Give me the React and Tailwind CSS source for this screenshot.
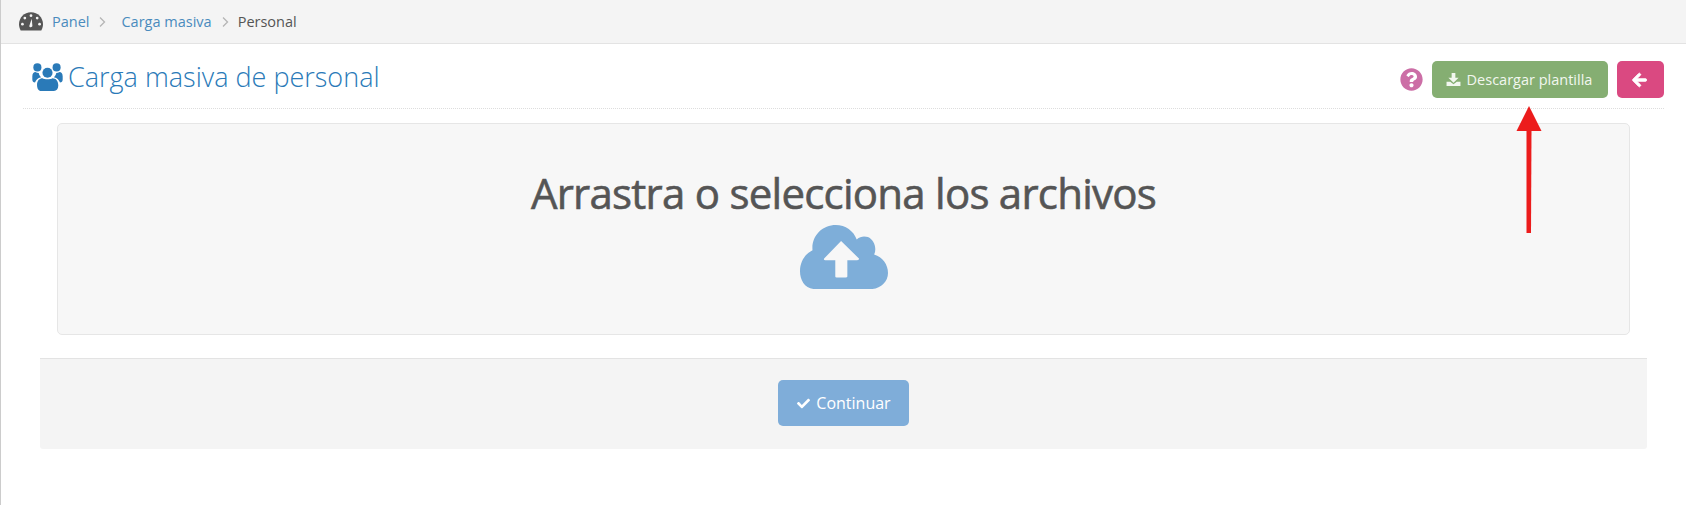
import { FaCheck, FaArrowLeft, FaQuestionCircle } from 'react-icons/fa';

const font = { fontFamily: '"Open Sans", sans-serif' };

function GaugeIcon() {
  return (
    <svg width="24" height="19" viewBox="57 37 70 54" className="shrink-0">
      <path d="M92 37C112 37 127 53 127 72C127 79 125 85 122 90H62C59 85 57 79 57 72C57 53 72 37 92 37Z" fill="#555" />
      <g fill="#f4f4f4">
        <circle cx="92" cy="47" r="4" />
        <circle cx="74" cy="54" r="4" />
        <circle cx="110" cy="54" r="4" />
        <circle cx="67" cy="72" r="4" />
        <circle cx="117" cy="72" r="4" />
        <path d="M94 56L96 76C97 82 87 83 87 77Z" />
      </g>
    </svg>
  );
}

function UsersIcon() {
  return (
    <svg width="31" height="28" viewBox="96 187 90 83" fill="#2a7ab8" className="shrink-0">
      <circle cx="141" cy="216" r="15" />
      <circle cx="111" cy="200" r="12" />
      <circle cx="168" cy="200" r="12" />
      <path d="M110 252C110 238 118 232 126 232C132 236 150 236 156 232C166 232 173 240 173 254C173 264 168 270 160 270H122C114 270 110 262 110 252Z" />
      <path d="M96 226C96 218 101 214 105 214C108 216 112 217 115 217C116 222 118 226 122 229C112 231 106 238 104 245C99 245 96 242 96 236Z" />
      <path d="M186 226C186 218 181 214 177 214C174 216 170 217 167 217C166 222 164 226 160 229C170 231 176 238 178 245C183 245 186 242 186 236Z" />
    </svg>
  );
}

function DownloadIcon() {
  return (
    <svg width="15" height="13" viewBox="0 0 15 14" fill="#f2f7ef" className="shrink-0">
      <path d="M5.5 0H9.5V5H13L7.5 10.5L2 5H5.5Z" />
      <path d="M0 9.5H4L7.5 12L11 9.5H15V14H0Z" />
    </svg>
  );
}

function CloudIcon() {
  return (
    <svg width="88" height="64" viewBox="670 222 197 191" preserveAspectRatio="none">
      <path
        d="M700 413C680 410 670 385 670 360C670 330 682 308 698 297C695 255 720 222 750 222C772 222 790 240 797 265C805 255 815 255 822 258C835 265 843 290 836 310C855 318 867 340 867 365C867 390 852 410 832 413Z"
        fill="#7eaed9"
      />
      <path
        d="M762 270L802 322Q803 327 798 327H776V376Q776 379 772 379H752Q749 379 749 376V327H727Q722 327 724 322Z"
        fill="#f7f7f7"
      />
    </svg>
  );
}

function Chevron({ className }) {
  return (
    <svg width="7" height="10" viewBox="0 0 7 10" fill="none" stroke="#b5b5b5" strokeWidth="1.3" className={className}>
      <path d="M1 0.5L5.5 5L1 9.5" />
    </svg>
  );
}

function RedArrow() {
  return (
    <svg width="30" height="130" viewBox="0 0 30 130" className="absolute left-[1513px] top-[105px]">
      <path d="M15 1L27.5 26H2.5Z" fill="#ec1c1c" />
      <path d="M12.5 24H17.5L17 128H12.5Z" fill="#ec1c1c" />
    </svg>
  );
}

export default function App() {
  return (
    <div className="relative min-h-screen bg-white border-l border-[#ccc] text-[#555]" style={font}>
      {/* breadcrumb */}
      <div className="h-[44px] bg-[#f4f4f4] border-b border-[#e3e3e3] flex items-center pl-[18px] text-[14.5px]">
        <GaugeIcon />
        <a className="ml-[9px] text-[#4a8bbd]">Panel</a>
        <Chevron className="ml-[10px]" />
        <a className="ml-[15px] text-[#4a8bbd]">Carga masiva</a>
        <Chevron className="ml-[10px]" />
        <span className="ml-[9px] text-[#555]">Personal</span>
      </div>

      {/* header */}
      <div className="ml-[22px] mr-[22px] h-[65px] border-b border-dotted border-[#ddd] flex items-start justify-between">
        <div className="flex items-center ml-[9px] pt-[14px]">
          <UsersIcon />
          <h1 className="ml-[5px] text-[27px] leading-[38px] font-light text-[#2a7ab8]">Carga masiva de personal</h1>
        </div>
        <div className="flex items-center pt-[17px]">
          <FaQuestionCircle className="w-[23px] h-[23px] text-[#cc6ea6]" />
          <button className="ml-[9px] w-[176px] h-[37px] pr-[2px] rounded-[5px] bg-[#85ae72] text-[#f2f7ef] text-[14.5px] flex items-center justify-center gap-[6px]">
            <DownloadIcon />
            Descargar plantilla
          </button>
          <button className="ml-[9px] w-[47px] h-[37px] rounded-[5px] bg-[#da4981] text-white flex items-center justify-center">
            <FaArrowLeft className="w-[17px] h-[16px] stroke-[30] mr-[2px]" />
          </button>
        </div>
      </div>

      {/* dropzone */}
      <div className="mt-[14px] ml-[56px] mr-[56px] h-[212px] bg-[#f7f7f7] border border-[#e6e6e6] rounded-[5px] flex flex-col items-center pt-[39px]">
        <h2 className="text-[42px] font-medium tracking-[-0.75px] leading-[60px] text-[#555] [-webkit-text-stroke:0.6px_#555]">Arrastra o selecciona los archivos</h2>
        <div className="mt-[2px]">
          <CloudIcon />
        </div>
      </div>

      {/* footer */}
      <div className="mt-[23px] ml-[39px] mr-[39px] h-[91px] bg-[#f4f4f4] border-t border-[#e3e3e3] rounded-b-[3px] flex justify-center pt-[21px]">
        <button className="w-[131px] h-[46px] rounded-[5px] bg-[#7fadd9] text-white text-[16px] flex items-center justify-center gap-[5px]">
          <FaCheck className="w-[15px] h-[13px]" />
          Continuar
        </button>
      </div>

      <RedArrow />
    </div>
  );
}
